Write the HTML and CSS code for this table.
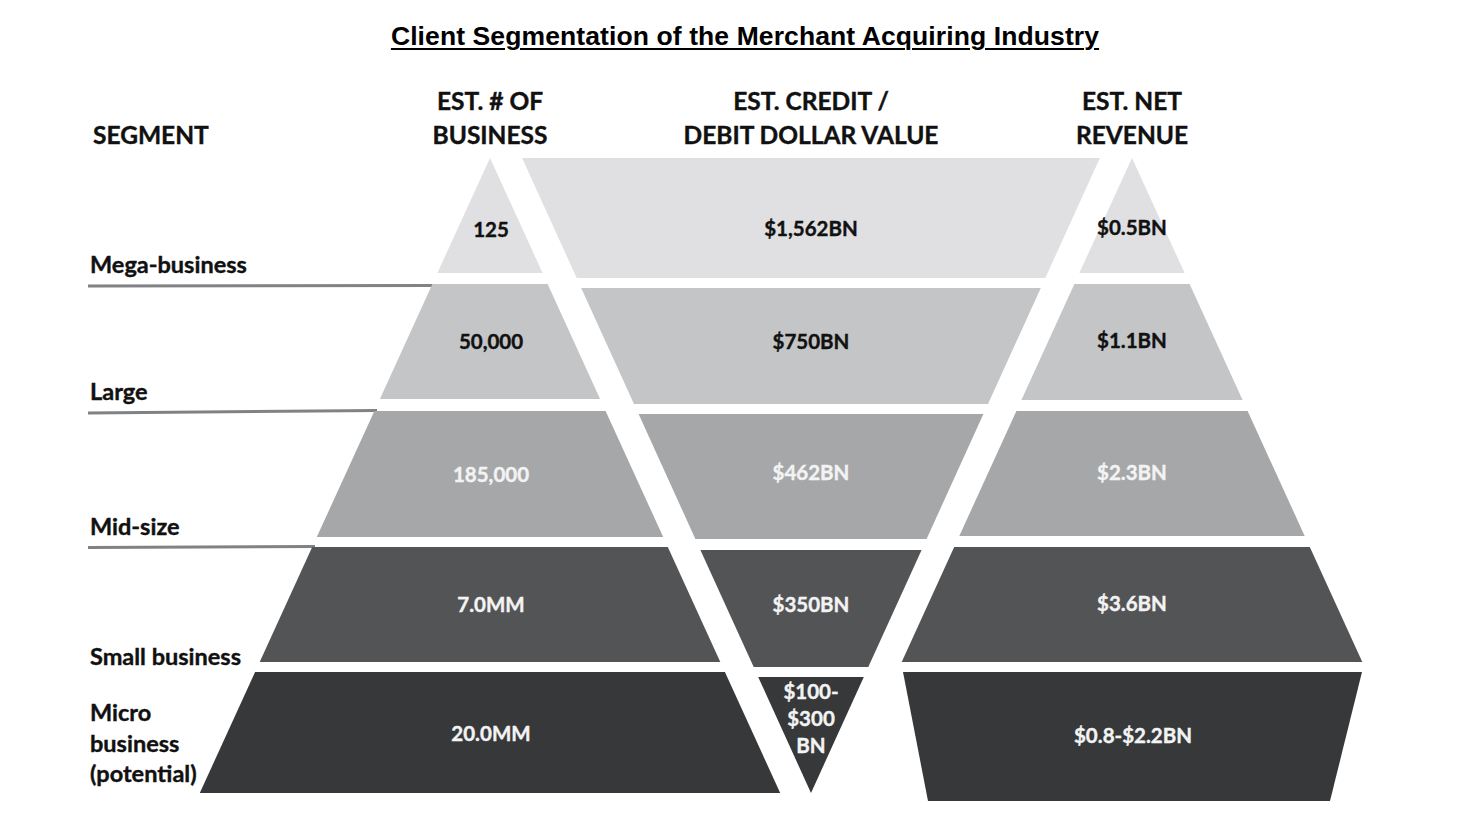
FILE: index.html
```html
<!DOCTYPE html>
<html lang="en">
<head>
<meta charset="utf-8">
<title>Client Segmentation of the Merchant Acquiring Industry</title>
<link rel="stylesheet" href="styles.css">
</head>
<body>
<div class="page">
  <div class="title-wrap">
    <h1 class="title">Client Segmentation of the Merchant Acquiring Industry</h1>
  </div>
  <div class="header-row">
    <div class="head head-seg">SEGMENT</div>
    <div class="head">EST. # OF<br>BUSINESS</div>
    <div class="head">EST. CREDIT /<br>DEBIT DOLLAR VALUE</div>
    <div class="head">EST. NET<br>REVENUE</div>
  </div>
  <svg class="chart" viewBox="0 150 1458 672" width="1458" height="672" xmlns="http://www.w3.org/2000/svg">
    <!-- segment divider lines -->
    <line class="divider" x1="88" y1="286" x2="433" y2="285.5"/>
    <line class="divider" x1="88" y1="413" x2="377" y2="410.5"/>
    <line class="divider" x1="88" y1="547.5" x2="315" y2="546.5"/>

    <!-- pyramid 1: number of businesses -->
    <polygon class="b1" points="490,158 542.6,273 437.4,273"/>
    <polygon class="b2" points="432.4,284 547.6,284 600.1,399 379.9,399"/>
    <polygon class="b3" points="374.4,411 605.6,411 663.2,537 316.8,537"/>
    <polygon class="b4" points="312.2,547 667.8,547 720.3,662 259.7,662"/>
    <polygon class="b5" points="255.1,672 724.9,672 780.2,793 199.8,793"/>

    <!-- inverted pyramid: dollar value -->
    <polygon class="b1" points="522.1,158 1099.9,158 1045.3,278 576.7,278"/>
    <polygon class="b2" points="581.2,288 1040.8,288 988,404 634,404"/>
    <polygon class="b3" points="638.6,414 983.4,414 926.6,539 695.4,539"/>
    <polygon class="b4" points="700.4,550 921.6,550 868.3,667 753.7,667"/>
    <polygon class="b5" points="758.2,677 863.8,677 811,793"/>

    <!-- pyramid 3: net revenue -->
    <polygon class="b1" points="1132,158 1184.6,273 1079.4,273"/>
    <polygon class="b2" points="1074.4,284 1189.6,284 1242.6,400 1021.4,400"/>
    <polygon class="b3" points="1016.4,411 1247.6,411 1304.7,536 959.3,536"/>
    <polygon class="b4" points="954.2,547 1309.8,547 1362.3,662 901.7,662"/>
    <polygon class="b5" points="903,672 1362,672 1330,801 928,801"/>

    <!-- segment labels -->
    <text class="seg" x="90" y="273">Mega-business</text>
    <text class="seg" x="90" y="400">Large</text>
    <text class="seg" x="90" y="535">Mid-size</text>
    <text class="seg" x="90" y="665">Small business</text>
    <text class="seg" x="90" y="721">Micro</text>
    <text class="seg" x="90" y="752">business</text>
    <text class="seg" x="90" y="782">(potential)</text>

    <!-- values: businesses -->
    <text class="val" x="491" y="237">125</text>
    <text class="val" x="491" y="349">50,000</text>
    <text class="val light" x="491" y="482">185,000</text>
    <text class="val light" x="491" y="612">7.0MM</text>
    <text class="val light" x="491" y="741">20.0MM</text>

    <!-- values: dollar value -->
    <text class="val" x="811" y="236">$1,562BN</text>
    <text class="val" x="811" y="349">$750BN</text>
    <text class="val light" x="811" y="480">$462BN</text>
    <text class="val light" x="811" y="612">$350BN</text>
    <text class="val light" x="811" y="699">$100-</text>
    <text class="val light" x="811" y="726">$300</text>
    <text class="val light" x="811" y="753">BN</text>

    <!-- values: revenue -->
    <text class="val" x="1132" y="235">$0.5BN</text>
    <text class="val" x="1132" y="348">$1.1BN</text>
    <text class="val light" x="1132" y="480">$2.3BN</text>
    <text class="val light" x="1132" y="611">$3.6BN</text>
    <text class="val light" x="1133" y="743">$0.8-$2.2BN</text>
  </svg>
</div>
</body>
</html>
```
FILE: styles.css
```css
html, body {
  margin: 0;
  padding: 0;
  background: #ffffff;
}

body {
  width: 1458px;
  height: 822px;
  overflow: hidden;
  font-family: Lato, "Open Sans", sans-serif;
  color: #111111;
}

.page {
  display: flex;
  flex-direction: column;
}

.title-wrap {
  height: 70px;
  box-sizing: border-box;
  padding: 23px 0 0 32px;
  text-align: center;
}

.title {
  margin: 0;
  font-family: "Liberation Sans", Arial, sans-serif;
  font-weight: 700;
  font-size: 26.5px;
  line-height: 26px;
  letter-spacing: 0.1px;
  text-decoration: underline;
  text-decoration-thickness: 2px;
  text-underline-offset: 3px;
  color: #000000;
}

.header-row {
  height: 80px;
  box-sizing: border-box;
  padding: 14px 0 0 93px;
  display: grid;
  grid-template-columns: 297px 200px 442px 200px;
  align-items: end;
}

.head {
  font-family: Lato, sans-serif;
  font-weight: 700;
  font-size: 24.5px;
  line-height: 34px;
  text-align: center;
  color: #111111;
  white-space: nowrap;
  -webkit-text-stroke: 0.4px #111111;
}

.head-seg {
  text-align: left;
}

.chart {
  display: block;
}

.divider {
  stroke: #818286;
  stroke-width: 3;
}

.b1 { fill: #e0e0e2; }
.b2 { fill: #c4c5c7; }
.b3 { fill: #a6a7a9; }
.b4 { fill: #535456; }
.b5 { fill: #37383a; }

.seg {
  font-family: Lato, sans-serif;
  font-weight: 700;
  font-size: 23.5px;
  fill: #111111;
  stroke: #111111;
  stroke-width: 0.4px;
}

.val {
  font-family: Lato, sans-serif;
  font-weight: 700;
  font-size: 20.5px;
  fill: #111111;
  stroke: #111111;
  stroke-width: 0.4px;
  text-anchor: middle;
}

.val.light {
  fill: #f3f3f3;
  stroke: #f3f3f3;
}
```
